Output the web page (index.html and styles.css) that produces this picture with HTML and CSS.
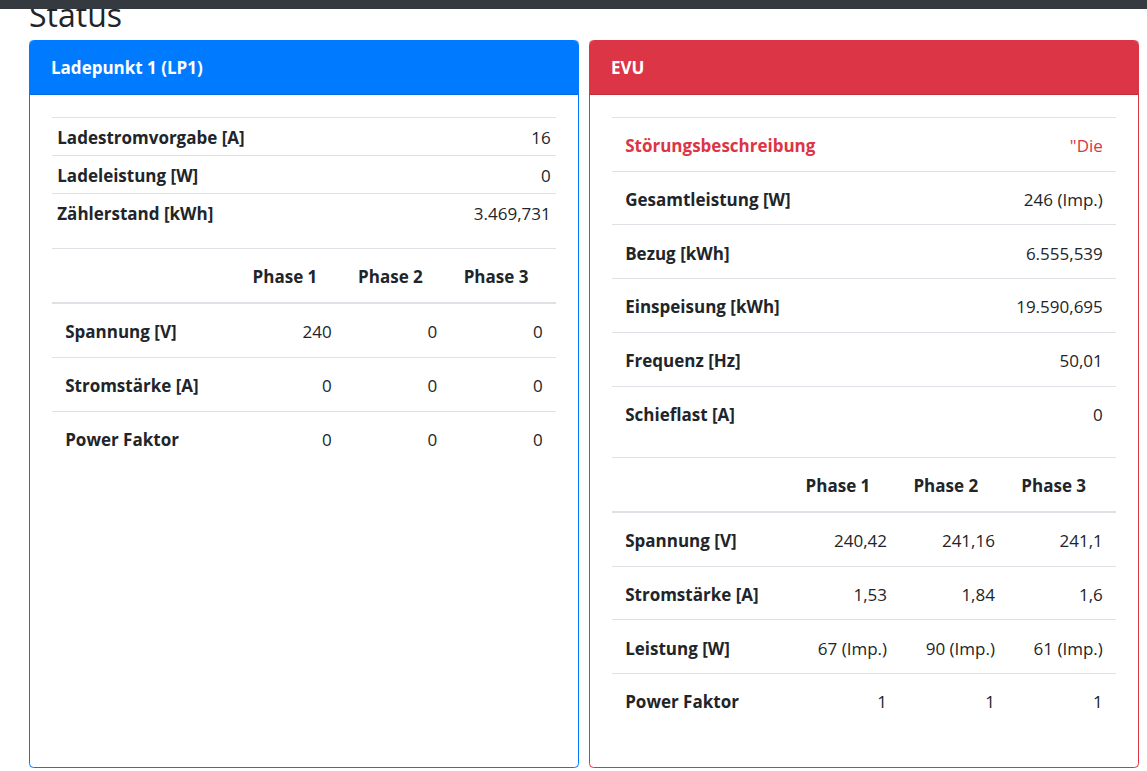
FILE: index.html
```html
<!DOCTYPE html>
<html lang="de">
<head>
    <meta charset="UTF-8">
    <meta name="viewport" content="width=device-width, initial-scale=1.0">
    <title>Status</title>
    <link rel="stylesheet" href="styles.css">
</head>
<body>
    <nav class="navbar"></nav>
    <main class="container">
        <h1>Status</h1>
        <div class="cards">
            <div class="card card-primary">
                <div class="card-header">Ladepunkt 1 (LP1)</div>
                <div class="card-body">
                    <table class="table table-sm">
                        <tbody>
                            <tr><th>Ladestromvorgabe [A]</th><td class="num">16</td></tr>
                            <tr><th>Ladeleistung [W]</th><td class="num">0</td></tr>
                            <tr><th>Zählerstand [kWh]</th><td class="num">3.469,731</td></tr>
                        </tbody>
                    </table>
                    <table class="table phases phases-lp">
                        <thead>
                            <tr><th></th><th>Phase 1</th><th>Phase 2</th><th>Phase 3</th></tr>
                        </thead>
                        <tbody>
                            <tr><th>Spannung [V]</th><td class="num">240</td><td class="num">0</td><td class="num">0</td></tr>
                            <tr><th>Stromstärke [A]</th><td class="num">0</td><td class="num">0</td><td class="num">0</td></tr>
                            <tr><th>Power Faktor</th><td class="num">0</td><td class="num">0</td><td class="num">0</td></tr>
                        </tbody>
                    </table>
                </div>
            </div>
            <div class="card card-danger">
                <div class="card-header">EVU</div>
                <div class="card-body">
                    <table class="table">
                        <tbody>
                            <tr class="text-danger"><th>Störungsbeschreibung</th><td class="num">"Die</td></tr>
                            <tr><th>Gesamtleistung [W]</th><td class="num">246 (Imp.)</td></tr>
                            <tr><th>Bezug [kWh]</th><td class="num">6.555,539</td></tr>
                            <tr><th>Einspeisung [kWh]</th><td class="num">19.590,695</td></tr>
                            <tr><th>Frequenz [Hz]</th><td class="num">50,01</td></tr>
                            <tr><th>Schieflast [A]</th><td class="num">0</td></tr>
                        </tbody>
                    </table>
                    <table class="table phases phases-evu">
                        <thead>
                            <tr><th></th><th>Phase 1</th><th>Phase 2</th><th>Phase 3</th></tr>
                        </thead>
                        <tbody>
                            <tr><th>Spannung [V]</th><td class="num">240,42</td><td class="num">241,16</td><td class="num">241,1</td></tr>
                            <tr><th>Stromstärke [A]</th><td class="num">1,53</td><td class="num">1,84</td><td class="num">1,6</td></tr>
                            <tr><th>Leistung [W]</th><td class="num">67 (Imp.)</td><td class="num">90 (Imp.)</td><td class="num">61 (Imp.)</td></tr>
                            <tr><th>Power Faktor</th><td class="num">1</td><td class="num">1</td><td class="num">1</td></tr>
                        </tbody>
                    </table>
                </div>
            </div>
        </div>
    </main>
</body>
</html>
```

FILE: styles.css
```css
body {
    margin: 0;
    font-family: "Open Sans", "Noto Sans", Arial, sans-serif;
    font-size: 17px;
    line-height: 26.4px;
    color: #212529;
    background-color: #fff;
}
.navbar {
    position: fixed;
    top: 0;
    left: 0;
    right: 0;
    height: 9px;
    background-color: #343a40;
    z-index: 10;
}
.container {
    padding: 0 8px 0 29px;
}
h1 {
    font-size: 32px;
    font-weight: 400;
    line-height: 38px;
    margin: -4px 0 6px;
}
.cards {
    display: flex;
    gap: 10px;
    align-items: stretch;
}
.card {
    width: 550px;
    box-sizing: border-box;
    border: 1px solid;
    border-radius: 4.4px;
    overflow: hidden;
}
.card-primary {
    border-color: #007bff;
}
.card-danger {
    border-color: #dc3545;
}
.card-header {
    padding: 14.2px 21px 12.2px;
    color: #fff;
    font-weight: bold;
    border-bottom: 1px solid rgba(0, 0, 0, 0.125);
}
.card-primary .card-header {
    background-color: #007bff;
}
.card-danger .card-header {
    background-color: #dc3545;
}
.card-body {
    padding: 22px;
}
.table {
    width: 100%;
    border-collapse: collapse;
    margin-bottom: 17.6px;
}
.table th,
.table td {
    padding: 15.2px 13.2px 11.2px;
    border-top: 1px solid #dee2e6;
    text-align: left;
    vertical-align: top;
}
.table th {
    font-weight: bold;
}
.table-sm th,
.table-sm td {
    padding: 7.28px 5.28px 3.28px;
}
.table .num {
    text-align: right;
}
.phases {
    table-layout: fixed;
}
.phases thead th {
    border-bottom: 2px solid #dee2e6;
}
.phases-lp th:first-child {
    width: 161px;
}
.phases-evu th:first-child {
    width: 154px;
}
.text-danger {
    color: #dc3545;
}
```
